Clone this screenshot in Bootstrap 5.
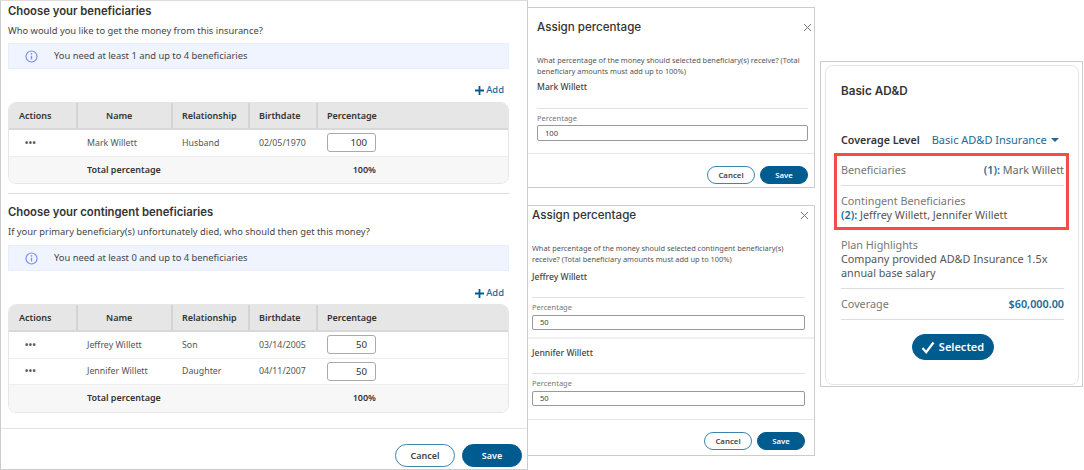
<!DOCTYPE html>
<html lang="en">
<head>
  <meta charset="UTF-8">
  <title>Beneficiaries</title>
  <link href="https://cdn.jsdelivr.net/npm/bootstrap@5.3.0/dist/css/bootstrap.min.css" rel="stylesheet">
  <style>
    body {
      width: 1084px;
      height: 470px;
      overflow: hidden;
      background: #fff;
      color: #444;
      font-family: "Noto Sans", sans-serif;
      font-size: 9.4px;
      line-height: 14px;
    }
    h2, h3 { font-family: Inter, sans-serif; color: #333; margin: 0; }
    .blue-text { color: #1a6a9a; }

    /* left panel */
    .main-panel {
      width: 528px;
      height: 470px;
      border: 1px solid #ccc;
      border-top-color: #ddd;
      flex: none;
    }
    .main-body { padding: 3px 18px 0 7px; height: 428px; border-bottom: 1px solid #e4e4e4; }
    .main-title { font-size: 11.3px; font-weight: 600; line-height: 14px; }
    .main-sub { font-size: 9.35px; margin-top: 6px; line-height: 14px; color: #444; }
    .note-box {
      background: #f0f4ff;
      border: 1px solid #e8eeff;
      height: 26px;
      margin-top: 5px;
      padding-left: 16px;
      gap: 16px;
      font-size: 9.35px;
    }
    .add-line { margin-top: 14px; height: 14px; padding-right: 5px; gap: 1px; font-size: 9.4px; font-weight: 500; color: #1a6a9a; }
    .ben-table {
      margin-top: 5px;
      border: 1px solid #e6e6e6;
      border-radius: 8px;
      overflow: hidden;
      font-size: 8.8px;
      color: #555;
    }
    .note-lower { margin-top: 6px; }
    .add-lower { margin-top: 15px; }
    .table-lower { margin-top: 4px; }
    .ben-row { display: grid; grid-template-columns: 67px 95px 77px 68px 1fr; align-items: center; height: 26.5px; border-bottom: 1px solid #eee; }
    .ben-row > div { padding-left: 11px; }
    .ben-head { background: #e6e6e6; height: 27px; font-size: 9px; font-weight: 600; color: #333; border-bottom: 2px solid #d8d8d8; }
    .ben-head > div { height: 100%; display: flex; align-items: center; border-left: 2px solid #d4d4d4; padding-left: 9px; }
    .ben-head > div:first-child { border-left: 0; padding-left: 10px; }
    .ben-head > .name-head { padding-left: 28px; }
    .ben-total { background: #f7f7f7; font-size: 9px; font-weight: 600; color: #333; border-bottom: 0; }
    .ben-row > .ben-dots { padding-left: 16px; font-weight: 700; letter-spacing: .6px; font-size: 8.5px; }
    .pct-box {
      width: 49px;
      height: 19px;
      border: 1px solid #aaa;
      border-radius: 3px;
      background: #fff;
      text-align: right;
      padding-right: 8px;
      line-height: 17px;
      font-size: 9.7px;
      color: #333;
    }
    .pct-total { width: 49px; text-align: right; }
    .sect-rule { border-top: 1px solid #ddd; margin: 9px 0 11px; }
    .pill {
      border-radius: 12px;
      font-weight: 600;
      font-size: 9px;
      display: flex;
      align-items: center;
      justify-content: center;
    }
    .pill-cancel { border: 1px solid #3d85ab; background: #fff; color: #444; }
    .pill-save { background: #005b8e; color: #fff; border: 1px solid #005b8e; }
    .main-foot { padding: 15px 5px 0 0; gap: 7px; }
    .main-foot .pill { width: 60px; height: 23px; }

    /* middle dialogs */
    .dialog-stack { width: 287px; flex: none; padding-top: 7px; }
    .dialog-box { border-top: 1px solid #ccc; border-bottom: 1px solid #ccc; border-right: 1px solid #ccc; background: #fff; }
    .dialog-one { height: 181px; padding: 0 6px 0 9px; }
    .dialog-two { height: 251px; margin-top: 17px; padding: 0 9px 0 4px; }
    .dialog-head { justify-content: space-between; align-items: center; }
    .dialog-title { font-size: 11.6px; font-weight: 500; line-height: 16px; }
    .dialog-one .dialog-head { padding-top: 11px; }
    .dialog-two .dialog-head { padding-top: 1px; }
    .close-mark { margin-right: -4px; }
    .dialog-text { font-size: 7.4px; line-height: 11px; color: #555; white-space: nowrap; }
    .dialog-one .dialog-text { margin-top: 20px; }
    .dialog-two .dialog-text { margin-top: 20px; }
    .dialog-name { font-size: 8.6px; font-weight: 500; color: #444; line-height: 14px; margin-top: 5px; }
    .dialog-one .dialog-name { margin-top: 3px; }
    .dialog-rule { border-top: 1px solid #e2e2e2; margin-top: 13px; }
    .dialog-one .dialog-rule { margin-top: 14px; }
    .dialog-label { font-size: 7.5px; line-height: 12px; color: #777; margin-top: 3px; }
    .dialog-input {
      height: 15px;
      margin-top: 2px;
      border: 1px solid #999;
      border-radius: 2px;
      padding-left: 7px;
      font-size: 7.6px;
      line-height: 13px;
      color: #444;
    }
    .dialog-one .dialog-input { height: 16px; margin-top: 1px; line-height: 14px; }
    .dialog-foot-rule { border-top: 1px solid #e6e6e6; margin: 12px -6px 0 -9px; }
    .dialog-two .dialog-foot-rule { margin: 13px -9px 0 -4px; }
    .dialog-band { border-top: 2px solid #f0f0f0; margin: 7px -9px 7px -4px; }
    .dialog-foot { justify-content: flex-end; gap: 5px; padding-top: 12px; }
    .dialog-foot .pill { width: 48px; height: 18px; font-size: 7.8px; }

    /* right card */
    .plan-outer {
      width: 263px;
      height: 326px;
      margin: 61px 0 0 5px;
      flex: none;
      border: 1px solid #ccc;
      padding: 3px 3px 0 4px;
    }
    .plan-card {
      height: 320px;
      border: 1px solid #e4e4e4;
      border-radius: 8px;
      padding: 0 9px 0 8px;
      font-size: 10.8px;
      line-height: 14px;
      color: #666;
    }
    .plan-title { font-size: 11.7px; font-weight: 600; padding: 18px 0 0 7px; line-height: 14px; }
    .plan-level { padding: 35px 0 0 7px; height: 55px; font-size: 11px; }
    .plan-level strong { color: #333; font-weight: 600; font-size: 10.7px; margin-right: 12px; }
    .caret-mark { display: inline-block; width: 0; height: 0; border: 4px solid transparent; border-top: 4px solid #1a6a9a; border-bottom: 0; margin-left: 4px; vertical-align: 2px; }
    .red-box { border: 3px solid #f44b4b; padding: 7px 2px 5px 4px; }
    .plan-row { padding-bottom: 8px; border-bottom: 1px solid #ddd; }
    .plan-block { margin-top: 8px; color: #555; }
    .plan-indent { padding: 0 5px 0 7px; }
    .plan-label { color: #777; }
    .plan-foot { margin-top: 14px; }
    .pill-selected { width: 82px; height: 26px; border-radius: 13px; font-size: 11px; gap: 4px; }
  </style>
</head>
<body>
<div class="d-flex">

  <!-- Left form -->
  <div class="main-panel">
    <div class="main-body">
      <h2 class="main-title">Choose your beneficiaries</h2>
      <div class="main-sub">Who would you like to get the money from this insurance?</div>
      <div class="note-box d-flex align-items-center">
        <svg width="13" height="13" viewBox="0 0 13 13"><circle cx="6.5" cy="6.5" r="5.5" fill="none" stroke="#7b8fe8" stroke-width="1.2"/><path d="M6.5 5.8v3.6" stroke="#7b8fe8" stroke-width="1.3"/><circle cx="6.5" cy="3.9" r=".8" fill="#7b8fe8"/></svg>
        <span>You need at least 1 and up to 4 beneficiaries</span>
      </div>
      <div class="add-line d-flex justify-content-end align-items-center">
        <svg width="11" height="11" viewBox="0 0 11 11"><path d="M5.5 1v9M1 5.5h9" stroke="#005b8e" stroke-width="1.8"/></svg>
        <span>Add</span>
      </div>
      <div class="ben-table">
        <div class="ben-row ben-head"><div>Actions</div><div class="name-head">Name</div><div>Relationship</div><div>Birthdate</div><div>Percentage</div></div>
        <div class="ben-row"><div class="ben-dots">•••</div><div>Mark Willett</div><div>Husband</div><div>02/05/1970</div><div><div class="pct-box">100</div></div></div>
        <div class="ben-row ben-total"><div></div><div class="text-nowrap">Total percentage</div><div></div><div></div><div><div class="pct-total">100%</div></div></div>
      </div>
      <div class="sect-rule"></div>
      <h2 class="main-title">Choose your contingent beneficiaries</h2>
      <div class="main-sub">If your primary beneficiary(s) unfortunately died, who should then get this money?</div>
      <div class="note-box note-lower d-flex align-items-center">
        <svg width="13" height="13" viewBox="0 0 13 13"><circle cx="6.5" cy="6.5" r="5.5" fill="none" stroke="#7b8fe8" stroke-width="1.2"/><path d="M6.5 5.8v3.6" stroke="#7b8fe8" stroke-width="1.3"/><circle cx="6.5" cy="3.9" r=".8" fill="#7b8fe8"/></svg>
        <span>You need at least 0 and up to 4 beneficiaries</span>
      </div>
      <div class="add-line add-lower d-flex justify-content-end align-items-center">
        <svg width="11" height="11" viewBox="0 0 11 11"><path d="M5.5 1v9M1 5.5h9" stroke="#005b8e" stroke-width="1.8"/></svg>
        <span>Add</span>
      </div>
      <div class="ben-table table-lower">
        <div class="ben-row ben-head"><div>Actions</div><div class="name-head">Name</div><div>Relationship</div><div>Birthdate</div><div>Percentage</div></div>
        <div class="ben-row"><div class="ben-dots">•••</div><div>Jeffrey Willett</div><div>Son</div><div>03/14/2005</div><div><div class="pct-box">50</div></div></div>
        <div class="ben-row"><div class="ben-dots">•••</div><div>Jennifer Willett</div><div>Daughter</div><div>04/11/2007</div><div><div class="pct-box">50</div></div></div>
        <div class="ben-row ben-total"><div></div><div class="text-nowrap">Total percentage</div><div></div><div></div><div><div class="pct-total">100%</div></div></div>
      </div>
    </div>
    <div class="main-foot d-flex justify-content-end">
      <div class="pill pill-cancel">Cancel</div>
      <div class="pill pill-save">Save</div>
    </div>
  </div>

  <!-- Assign percentage dialogs -->
  <div class="dialog-stack">
    <div class="dialog-box dialog-one">
      <div class="dialog-head d-flex">
        <h3 class="dialog-title">Assign percentage</h3>
        <svg class="close-mark" width="9" height="9" viewBox="0 0 9 9"><path d="M1 1l7 7M8 1l-7 7" stroke="#777" stroke-width="1"/></svg>
      </div>
      <div class="dialog-text">What percentage of the money should selected beneficiary(s) receive? (Total<br>beneficiary amounts must add up to 100%)</div>
      <div class="dialog-name">Mark Willett</div>
      <div class="dialog-rule"></div>
      <div class="dialog-label">Percentage</div>
      <div class="dialog-input">100</div>
      <div class="dialog-foot-rule"></div>
      <div class="dialog-foot d-flex">
        <div class="pill pill-cancel">Cancel</div>
        <div class="pill pill-save">Save</div>
      </div>
    </div>

    <div class="dialog-box dialog-two">
      <div class="dialog-head d-flex">
        <h3 class="dialog-title">Assign percentage</h3>
        <svg class="close-mark" width="9" height="9" viewBox="0 0 9 9"><path d="M1 1l7 7M8 1l-7 7" stroke="#777" stroke-width="1"/></svg>
      </div>
      <div class="dialog-text">What percentage of the money should selected contingent beneficiary(s)<br>receive? (Total beneficiary amounts must add up to 100%)</div>
      <div class="dialog-name">Jeffrey Willett</div>
      <div class="dialog-rule"></div>
      <div class="dialog-label">Percentage</div>
      <div class="dialog-input">50</div>
      <div class="dialog-band"></div>
      <div class="dialog-name">Jennifer Willett</div>
      <div class="dialog-rule"></div>
      <div class="dialog-label">Percentage</div>
      <div class="dialog-input">50</div>
      <div class="dialog-foot-rule"></div>
      <div class="dialog-foot d-flex">
        <div class="pill pill-cancel">Cancel</div>
        <div class="pill pill-save">Save</div>
      </div>
    </div>
  </div>

  <!-- Plan card -->
  <div class="plan-outer">
    <div class="plan-card">
      <h3 class="plan-title">Basic AD&amp;D</h3>
      <div class="plan-level text-nowrap"><strong>Coverage Level</strong><span class="blue-text">Basic AD&amp;D Insurance<span class="caret-mark"></span></span></div>
      <div class="red-box">
        <div class="plan-row d-flex justify-content-between"><span class="plan-label">Beneficiaries</span><span><b class="blue-text fw-semibold">(1):</b> Mark Willett</span></div>
        <div class="plan-block"><span class="plan-label">Contingent Beneficiaries</span><br><b class="blue-text fw-semibold">(2):</b> Jeffrey Willett, Jennifer Willett</div>
      </div>
      <div class="plan-indent">
        <div class="plan-row plan-block"><span class="plan-label">Plan Highlights</span><br>Company provided AD&amp;D Insurance 1.5x<br>annual base salary</div>
        <div class="plan-row plan-block d-flex justify-content-between"><span class="plan-label">Coverage</span><b class="blue-text fw-semibold">$60,000.00</b></div>
        <div class="plan-foot d-flex justify-content-center">
          <div class="pill pill-save pill-selected">
            <svg width="14" height="13" viewBox="0 0 14 13"><path d="M1.5 7l3.7 4.2L12.5 1.5" fill="none" stroke="#fff" stroke-width="2.2"/></svg>
            <span>Selected</span>
          </div>
        </div>
      </div>
    </div>
  </div>

</div>
<script src="https://cdn.jsdelivr.net/npm/bootstrap@5.3.0/dist/js/bootstrap.bundle.min.js"></script>
</body>
</html>
